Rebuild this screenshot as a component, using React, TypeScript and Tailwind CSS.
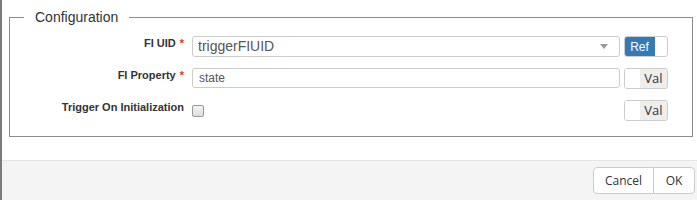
import React from 'react';

function Label({ text, required }: { text: string; required?: boolean }) {
  return (
    <div className="w-[174px] shrink-0 text-right text-[11px] font-bold leading-[14px] text-[#333]">
      {text}
      {required && <span className="ml-[4px] text-[#e0322d]">*</span>}
    </div>
  );
}

function RefToggle() {
  return (
    <div className="ml-[4px] flex h-[21px] w-[44px] shrink-0 overflow-hidden rounded-[3px] border border-[#ccc]">
      <div className="-my-px -ml-px flex w-[31px] items-center justify-center rounded-l-[3px] bg-[#337ab7] text-[12px] text-white">
        Ref
      </div>
    </div>
  );
}

function ValToggle() {
  return (
    <div className="ml-[4px] flex h-[21px] w-[44px] shrink-0 overflow-hidden rounded-[3px] border border-[#ccc]">
      <div className="w-[15px] bg-white" />
      <div className="flex flex-1 items-center justify-center bg-[#eee] font-['Open_Sans',sans-serif] text-[13px] text-[#333]">
        Val
      </div>
    </div>
  );
}

export default function App() {
  return (
    <div className="flex h-[200px] w-[697px] overflow-hidden bg-white font-['Liberation_Sans',Arial,sans-serif] text-[#333]">
      <div className="w-[2px] shrink-0 bg-[#7b7b7b]" />
      <div className="flex flex-1 flex-col">
        <div className="h-[160px] pl-[7px] pr-[4px] pt-[7px]">
          <fieldset className="border border-[#8c8c8c] pb-[15px] pt-[9px]">
            <legend className="ml-[14px] px-[11px] text-[14px] leading-[20px] text-[#333]">Configuration</legend>
            <div className="flex flex-col gap-[11px] pr-[24px]">
              {/* FI UID */}
              <div className="flex h-[21px] items-start">
                <Label text="FI UID" required />
                <div className="ml-[8px] flex h-[21px] w-[428px] items-center justify-between rounded-[3px] border border-[#ccc] pl-[5px] pr-[11px]">
                  <span className="text-[14px] text-[#555]">triggerFIUID</span>
                  <svg width="8" height="5" viewBox="0 0 8 5">
                    <path d="M0 0 L8 0 L4 5 Z" fill="#999" />
                  </svg>
                </div>
                <RefToggle />
              </div>

              {/* FI Property */}
              <div className="flex h-[21px] items-start">
                <Label text="FI Property" required />
                <div className="ml-[8px] flex h-[20px] w-[428px] items-center rounded-[3px] border border-[#ccc] pl-[6px]">
                  <span className="text-[12px] text-[#555]">state</span>
                </div>
                <ValToggle />
              </div>

              {/* Trigger On Initialization */}
              <div className="flex h-[21px] items-start">
                <Label text="Trigger On Initialization" />
                <div className="ml-[8px] w-[428px] pt-[5px]">
                  <div className="h-[12px] w-[12px] rounded-[2px] border border-[#999] bg-gradient-to-b from-[#f4f4f4] to-[#dedede]" />
                </div>
                <ValToggle />
              </div>
            </div>
          </fieldset>
        </div>
        <div className="flex flex-1 items-start justify-end border-t border-[#e5e5e5] bg-[#f4f4f4] pr-[2px] pt-[6px]">
          <div className="flex h-[27px] font-['Open_Sans',sans-serif] text-[12px] text-[#333]">
            <button className="w-[61px] rounded-l-[4px] border border-[#ccc] bg-white text-center">Cancel</button>
            <button className="-ml-px w-[42px] rounded-r-[4px] border border-[#ccc] bg-white text-center">OK</button>
          </div>
        </div>
      </div>
    </div>
  );
}
